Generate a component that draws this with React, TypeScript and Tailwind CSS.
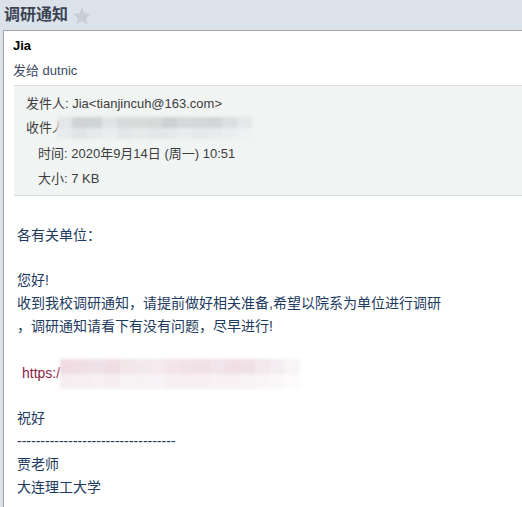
import React from "react";

const sans = "font-['Microsoft_YaHei','Liberation_Sans','Noto_Sans_CJK_SC',sans-serif]";

const Blur = ({ top, bottom, h }: { top: string[]; bottom: string[]; h: string }) => (
  <span className={`inline-flex flex-col ${h} w-max blur-[1.5px] align-middle shrink-0`}>
    <span className="flex flex-1">
      {top.map((c, i) => (
        <span key={i} className="w-[15px] h-full" style={{ background: c }} />
      ))}
    </span>
    <span className="flex flex-1">
      {bottom.map((c, i) => (
        <span key={i} className="w-[15px] h-full" style={{ background: c }} />
      ))}
    </span>
  </span>
);

const Star = () => (
  <svg width="20" height="20" viewBox="0 0 24 24" className="ml-[4px] mt-[1px]">
    <path
      d="M12 1.5l3.1 7.2 7.6.7-5.8 5.1 1.7 7.6L12 18.1l-6.6 4 1.7-7.6L1.3 9.4l7.6-.7z"
      fill="#c9ced5"
    />
  </svg>
);

const App = () => {
  const receivers = ["#e4e7e7", "#cfd3d4", "#cfd4d5", "#e0e4e4", "#d8dadb", "#d9dbdb", "#d7d9d9", "#cdd1d2", "#d6d9da", "#d4d7d8", "#d2d6d7", "#dcdfdf", "#e4e8e8"];
  const receivers2 = ["#e8ebeb", "#e2e5e5", "#e6e9e9", "#eaeded", "#e4e7e7", "#e7eaea", "#e3e6e6", "#e5e8e8", "#e9ecec", "#e6e9e9", "#e8ebeb", "#ebeeee", "#eef1f1"];
  const link = ["#f0dce2", "#efdfe5", "#eee2e8", "#efdde3", "#f2e6e8", "#f3e9ec", "#f5eaee", "#f4e4ea", "#f1e2e8", "#f0e1e7", "#f1e4ea", "#f0dfe5", "#efe0e6", "#f3e8ec", "#f4eef2", "#f8f5f7"];
  const link2 = ["#f6eef1", "#f6eff2", "#f7f1f4", "#f5eef1", "#f8f3f5", "#f7f2f4", "#f8f3f6", "#f7f0f3", "#f6eff2", "#f7f0f3", "#f8f2f5", "#f7f1f4", "#f8f3f6", "#f9f5f7", "#faf7f9", "#fcfafb"];

  return (
    <div className={`w-[522px] h-[507px] overflow-hidden bg-[#dbe2ea] ${sans}`}>
      <div className="h-[30px] flex items-center pl-[4px]">
        <h1 className="text-[16px] font-bold text-[#3c4454]">调研通知</h1>
        <Star />
      </div>
      <div className="ml-[3px] bg-white border-l border-t border-[#a3a7ab] h-[477px]">
        <div className="pl-[9px] pt-[6px]">
          <div className="text-[13px] font-bold text-black leading-[18px] font-['Liberation_Sans','Noto_Sans_CJK_SC',sans-serif]">Jia</div>
          <div className="text-[13px] text-[#3d4b63] leading-[18px] mt-[7px]">发给 dutnic</div>
        </div>
        <div className="ml-[10px] mt-[5px] bg-[#f0f4f3] border-y border-[#dcdedd] text-[13px] text-[#3d3d3d] pt-[6px] pb-[4px]">
          <div className="pl-[12px] leading-[24px]">发件人: Jia&lt;tianjincuh@163.com&gt;</div>
          <div className="pl-[12px] h-[24px] flex items-center">
            <span>收件人</span>
            <span className="-ml-[8px]">
              <Blur top={receivers} bottom={receivers2} h="h-[22px]" />
            </span>
          </div>
          <div className="pl-[24px] leading-[26px] mt-[1px]">时间: 2020年9月14日 (周一) 10:51</div>
          <div className="pl-[24px] leading-[24px]">大小: 7 KB</div>
        </div>
        <div className="pl-[13px] pt-[28px] text-[14px] leading-[23px] text-[#1d3a60] font-['SimSun','Liberation_Sans','Noto_Sans_CJK_SC',sans-serif]">
          <div>各有关单位：</div>
          <div className="h-[22px]" />
          <div>您好!</div>
          <div>收到我校调研通知，请提前做好相关准备,希望以院系为单位进行调研</div>
          <div>，调研通知请看下有没有问题，尽早进行!</div>
          <div className="h-[24px]" />
          <div className="pl-[5px] h-[23px] flex items-center">
            <span className="text-[#8b1a4a]">https:/</span>
            <Blur top={link} bottom={link2} h="h-[30px]" />
          </div>
          <div className="h-[22px]" />
          <div>祝好</div>
          <div>----------------------------------</div>
          <div>贾老师</div>
          <div>大连理工大学</div>
        </div>
      </div>
    </div>
  );
};

export default App;
